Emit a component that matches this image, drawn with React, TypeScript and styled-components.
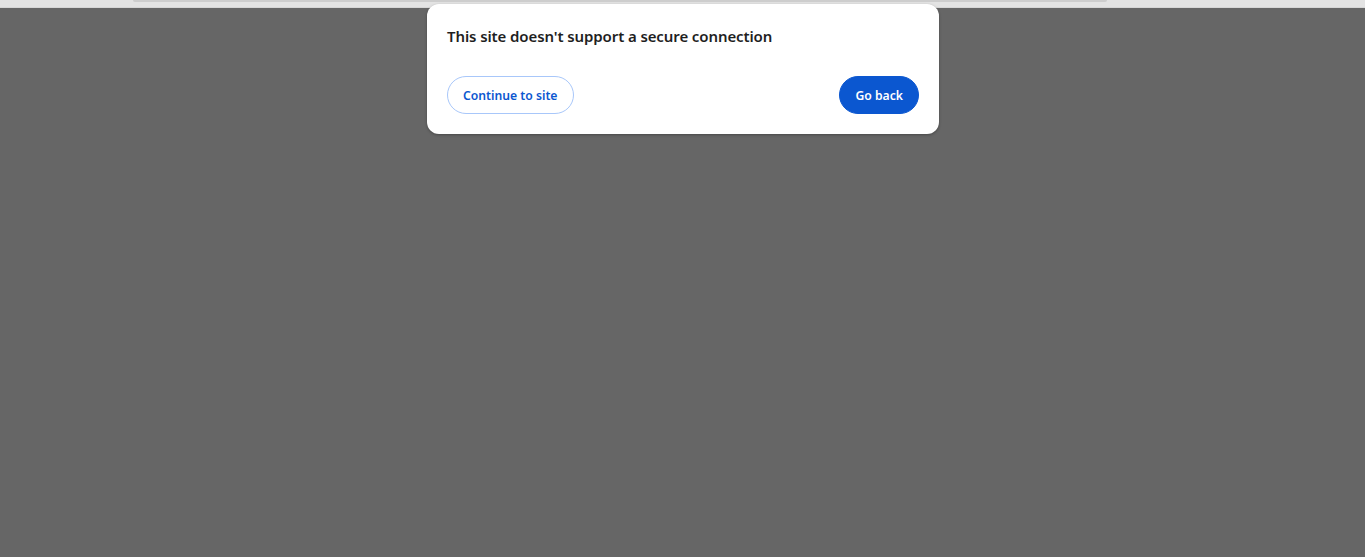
import React from 'react';
import styled, {createGlobalStyle} from 'styled-components';

const GlobalStyle = createGlobalStyle`
  html, body {
    margin: 0;
    padding: 0;
    background: #666666;
    font-family: "Noto Sans", "Open Sans", sans-serif;
  }
`

const Page = styled.div`
  position: relative;
  width: 100%;
  height: 557px;
  background: #666666;
  overflow: hidden;
`

const TopStrip = styled.div`
  height: 7px;
  background: #e3e3e3;
  border-bottom: 1px solid #d6d6d6;
  display: flex;
  justify-content: flex-start;
  padding-left: 133px;
`

const OmniboxEdge = styled.div`
  width: 974px;
  height: 2px;
  background: #cdcdcd;
  border-radius: 0 0 2px 2px;
`

const Dialog = styled.div`
  position: absolute;
  top: 4px;
  left: 427px;
  width: 512px;
  box-sizing: border-box;
  padding: 23px 20px 20px;
  background: #ffffff;
  border-radius: 12px;
  box-shadow: 0 1px 3px rgba(0, 0, 0, 0.3);
  display: flex;
  flex-direction: column;
  gap: 31px;
`

const Title = styled.h1`
  margin: 0;
  font-size: 15px;
  line-height: 18px;
  font-weight: 600;
  color: #1f1f1f;
  letter-spacing: -0.1px;
`

const Actions = styled.div`
  display: flex;
  justify-content: space-between;
  align-items: center;
`

const Button = styled.button<{ $primary?: boolean }>`
  height: 38px;
  padding: 0 15px;
  border-radius: 19px;
  font-family: inherit;
  font-size: 12.2px;
  font-weight: 600;
  cursor: pointer;
  border: 1px solid ${p => p.$primary ? '#0b57d0' : '#a8c7fa'};
  background: ${p => p.$primary ? '#0b57d0' : '#ffffff'};
  color: ${p => p.$primary ? '#ffffff' : '#0b57d0'};
`

const App = () => {
    return (
        <Page>
            <GlobalStyle/>
            <TopStrip>
                <OmniboxEdge/>
            </TopStrip>
            <Dialog>
                <Title>This site doesn't support a secure connection</Title>
                <Actions>
                    <Button>Continue to site</Button>
                    <Button $primary>Go back</Button>
                </Actions>
            </Dialog>
        </Page>
    );
};

export default App;
